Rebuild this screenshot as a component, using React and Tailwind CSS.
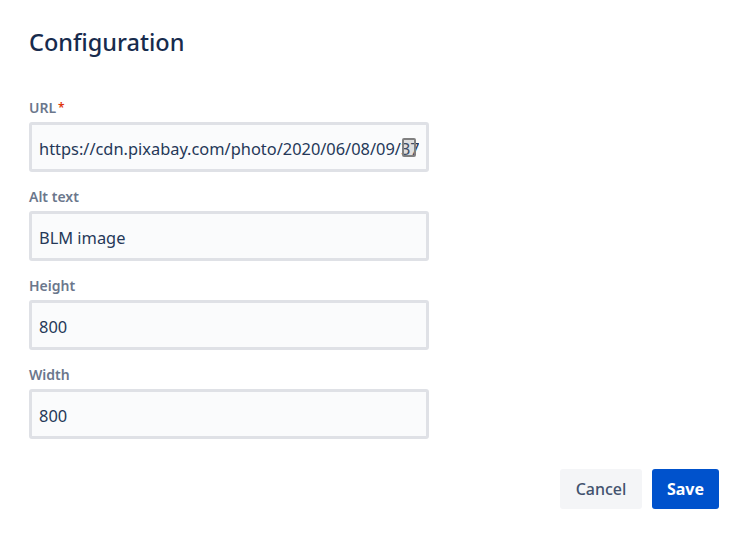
import React from "react";

const fields = [
  { label: "URL", value: "https://cdn.pixabay.com/photo/2020/06/08/09/37", required: true },
  { label: "Alt text", value: "BLM image" },
  { label: "Height", value: "800" },
  { label: "Width", value: "800" },
];

const Field = ({ label, value, required }) => (
  <div className="h-[89px] w-[400px]">
    <div className="flex h-[22px] items-center text-[14px] font-semibold leading-[20px] text-[#6b778c]">
      {label}
      {required && <span className="ml-[2px] text-[12px] text-[#de350b]">*</span>}
    </div>
    <div className="relative mt-[3px] h-[50px] rounded-[3px] border-[3px] border-[#dfe1e6] bg-[#fafbfc]">
      <div className="ml-[7px] mr-[7px] overflow-hidden whitespace-nowrap pt-[2px] text-[16.4px] leading-[44px] text-[#253858]">
        {value}
      </div>
      {required && (
        <div className="absolute left-[370px] top-[13px] h-[19px] w-[14px] rounded-[2px] border-2 border-[#808080] bg-[#8a8a8a]/25" />
      )}
    </div>
  </div>
);

const App = () => {
  return (
    <div className="h-[535px] w-[748px] bg-white px-[29px] pt-[24px] font-['Noto_Sans',sans-serif]">
      <h1 className="h-[36px] text-[23.5px] font-medium leading-[36px] text-[#172b4d]">
        Configuration
      </h1>

      <div className="mt-[37px]">
        {fields.map((field) => (
          <Field key={field.label} {...field} />
        ))}
      </div>

      <div className="mt-[16px] flex justify-end gap-[10px]">
        <button className="h-[40px] w-[82px] rounded-[3px] bg-[#f4f5f7] text-[16px] font-medium text-[#42526e]">
          Cancel
        </button>
        <button className="h-[40px] w-[67px] rounded-[3px] bg-[#0052cc] text-[16px] font-bold text-white">
          Save
        </button>
      </div>
    </div>
  );
};

export default App;
